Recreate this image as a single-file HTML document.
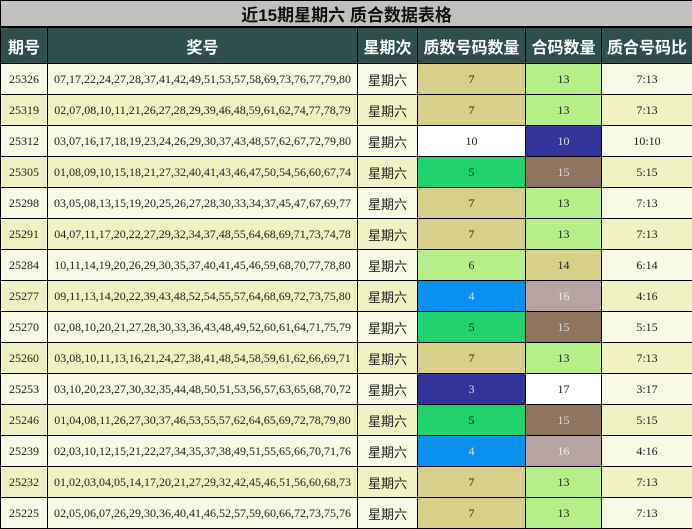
<!DOCTYPE html>
<html><head><meta charset="utf-8"><style>
body{margin:0;background:#fff;}
table{border-collapse:collapse;table-layout:fixed;width:692px;font-family:"Liberation Serif","Noto Serif CJK SC",serif;font-size:12px;color:#222;}
td,th{border:1px solid #000;text-align:center;padding:0;overflow:hidden;white-space:nowrap;}
.t td{height:24px;background:#c0c0c0;font-family:"Liberation Sans","Noto Sans CJK SC",sans-serif;font-weight:bold;font-size:17px;color:#111;border-bottom:2px solid #000;}
th{height:35px;background:#2f4f4f;color:#fff;font-family:"Liberation Sans","Noto Sans CJK SC",sans-serif;font-size:16px;font-weight:bold;}
tbody tr td{height:30px;}
tr.o td{background:#f8fae6;}
tr.e td{background:#eff3c4;}
.wk{font-family:"Liberation Sans","Noto Sans CJK SC",sans-serif;font-size:13px;}
tr td.k{background:#d8cf88}
tr td.g{background:#b6ee88}
tr td.w{background:#fff}
tr td.n{background:#333399;color:#ddd}
tr td.gr{background:#22d36d}
tr td.b{background:#8f7460;color:#ddd}
tr td.bl{background:#0a90f0;color:#ddd}
tr td.p{background:#b8a4a0;color:#eee}
</style></head><body>
<table>
<colgroup><col style="width:47px"><col style="width:310px"><col style="width:60px"><col style="width:108px"><col style="width:76px"><col style="width:91px"></colgroup>
<tr class="t"><td colspan="6">近15期星期六 质合数据表格</td></tr>
<tr><th>期号</th><th>奖号</th><th>星期次</th><th>质数号码数量</th><th>合码数量</th><th>质合号码比</th></tr>
<tbody>
<tr class="o"><td>25326</td><td>07,17,22,24,27,28,37,41,42,49,51,53,57,58,69,73,76,77,79,80</td><td class="wk">星期六</td><td class="k">7</td><td class="g">13</td><td>7:13</td></tr>
<tr class="e"><td>25319</td><td>02,07,08,10,11,21,26,27,28,29,39,46,48,59,61,62,74,77,78,79</td><td class="wk">星期六</td><td class="k">7</td><td class="g">13</td><td>7:13</td></tr>
<tr class="o"><td>25312</td><td>03,07,16,17,18,19,23,24,26,29,30,37,43,48,57,62,67,72,79,80</td><td class="wk">星期六</td><td class="w">10</td><td class="n">10</td><td>10:10</td></tr>
<tr class="e"><td>25305</td><td>01,08,09,10,15,18,21,27,32,40,41,43,46,47,50,54,56,60,67,74</td><td class="wk">星期六</td><td class="gr">5</td><td class="b">15</td><td>5:15</td></tr>
<tr class="o"><td>25298</td><td>03,05,08,13,15,19,20,25,26,27,28,30,33,34,37,45,47,67,69,77</td><td class="wk">星期六</td><td class="k">7</td><td class="g">13</td><td>7:13</td></tr>
<tr class="e"><td>25291</td><td>04,07,11,17,20,22,27,29,32,34,37,48,55,64,68,69,71,73,74,78</td><td class="wk">星期六</td><td class="k">7</td><td class="g">13</td><td>7:13</td></tr>
<tr class="o"><td>25284</td><td>10,11,14,19,20,26,29,30,35,37,40,41,45,46,59,68,70,77,78,80</td><td class="wk">星期六</td><td class="g">6</td><td class="k">14</td><td>6:14</td></tr>
<tr class="e"><td>25277</td><td>09,11,13,14,20,22,39,43,48,52,54,55,57,64,68,69,72,73,75,80</td><td class="wk">星期六</td><td class="bl">4</td><td class="p">16</td><td>4:16</td></tr>
<tr class="o"><td>25270</td><td>02,08,10,20,21,27,28,30,33,36,43,48,49,52,60,61,64,71,75,79</td><td class="wk">星期六</td><td class="gr">5</td><td class="b">15</td><td>5:15</td></tr>
<tr class="e"><td>25260</td><td>03,08,10,11,13,16,21,24,27,38,41,48,54,58,59,61,62,66,69,71</td><td class="wk">星期六</td><td class="k">7</td><td class="g">13</td><td>7:13</td></tr>
<tr class="o"><td>25253</td><td>03,10,20,23,27,30,32,35,44,48,50,51,53,56,57,63,65,68,70,72</td><td class="wk">星期六</td><td class="n">3</td><td class="w">17</td><td>3:17</td></tr>
<tr class="e"><td>25246</td><td>01,04,08,11,26,27,30,37,46,53,55,57,62,64,65,69,72,78,79,80</td><td class="wk">星期六</td><td class="gr">5</td><td class="b">15</td><td>5:15</td></tr>
<tr class="o"><td>25239</td><td>02,03,10,12,15,21,22,27,34,35,37,38,49,51,55,65,66,70,71,76</td><td class="wk">星期六</td><td class="bl">4</td><td class="p">16</td><td>4:16</td></tr>
<tr class="e"><td>25232</td><td>01,02,03,04,05,14,17,20,21,27,29,32,42,45,46,51,56,60,68,73</td><td class="wk">星期六</td><td class="k">7</td><td class="g">13</td><td>7:13</td></tr>
<tr class="o"><td>25225</td><td>02,05,06,07,26,29,30,36,40,41,46,52,57,59,60,66,72,73,75,76</td><td class="wk">星期六</td><td class="k">7</td><td class="g">13</td><td>7:13</td></tr>
</tbody></table>
</body></html>
